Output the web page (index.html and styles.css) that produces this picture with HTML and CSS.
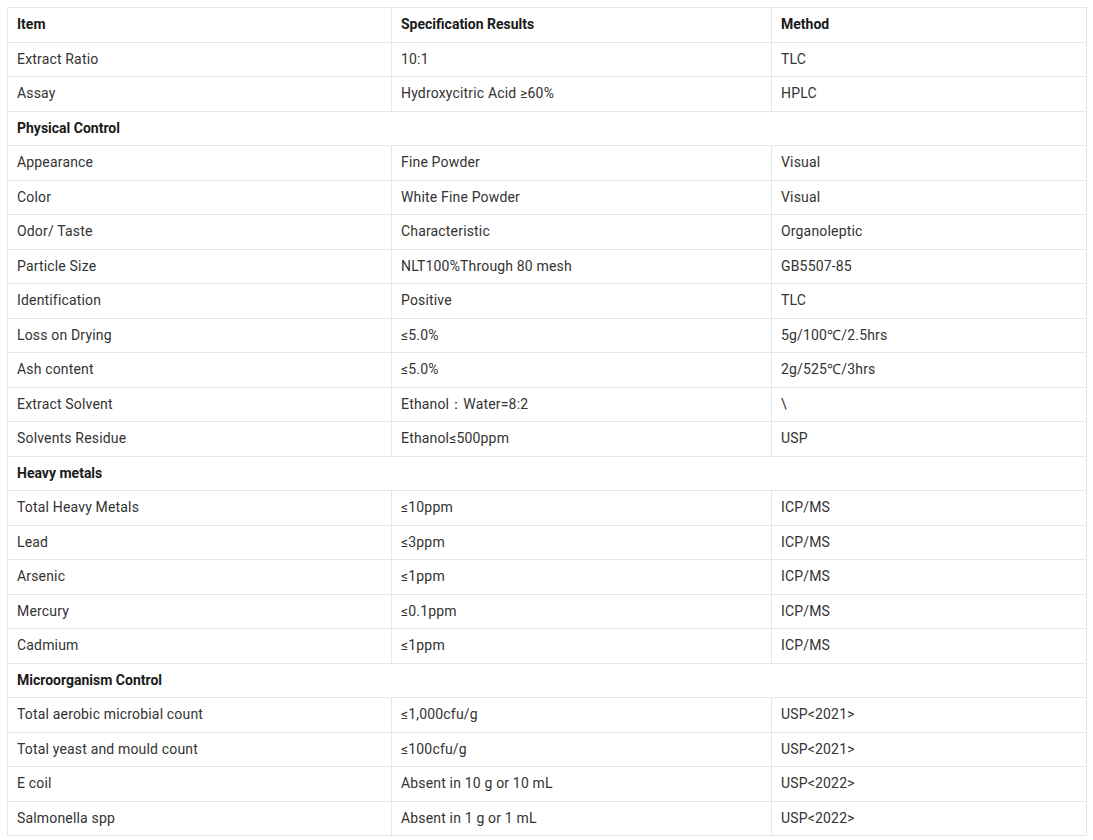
FILE: index.html
```html
<!DOCTYPE html>
<html>
<head>
<meta charset="utf-8">
<link rel="stylesheet" href="styles.css">
</head>
<body>
<div class="wrap">
<table class="spec">
<colgroup><col class="c1"><col class="c2"><col class="c3"></colgroup>
<tr class="head"><td>Item</td><td>Specification Results</td><td>Method</td></tr>
<tr><td>Extract Ratio</td><td>10:1</td><td>TLC</td></tr>
<tr><td>Assay</td><td>Hydroxycitric Acid ≥60%</td><td>HPLC</td></tr>
<tr class="section"><td colspan="3">Physical Control</td></tr>
<tr><td>Appearance</td><td>Fine Powder</td><td>Visual</td></tr>
<tr><td>Color</td><td>White Fine Powder</td><td>Visual</td></tr>
<tr><td>Odor/ Taste</td><td>Characteristic</td><td>Organoleptic</td></tr>
<tr><td>Particle Size</td><td>NLT100%Through 80 mesh</td><td>GB5507-85</td></tr>
<tr><td>Identification</td><td>Positive</td><td>TLC</td></tr>
<tr><td>Loss on Drying</td><td>≤5.0%</td><td>5g/100℃/2.5hrs</td></tr>
<tr><td>Ash content</td><td>≤5.0%</td><td>2g/525℃/3hrs</td></tr>
<tr><td>Extract Solvent</td><td>Ethanol：Water=8:2</td><td>\</td></tr>
<tr><td>Solvents Residue</td><td>Ethanol≤500ppm</td><td>USP</td></tr>
<tr class="section"><td colspan="3">Heavy metals</td></tr>
<tr><td>Total Heavy Metals</td><td>≤10ppm</td><td>ICP/MS</td></tr>
<tr><td>Lead</td><td>≤3ppm</td><td>ICP/MS</td></tr>
<tr><td>Arsenic</td><td>≤1ppm</td><td>ICP/MS</td></tr>
<tr><td>Mercury</td><td>≤0.1ppm</td><td>ICP/MS</td></tr>
<tr><td>Cadmium</td><td>≤1ppm</td><td>ICP/MS</td></tr>
<tr class="section"><td colspan="3">Microorganism Control</td></tr>
<tr><td>Total aerobic microbial count</td><td>≤1,000cfu/g</td><td>USP&lt;2021&gt;</td></tr>
<tr><td>Total yeast and mould count</td><td>≤100cfu/g</td><td>USP&lt;2021&gt;</td></tr>
<tr><td>E coil</td><td>Absent in 10 g or 10 mL</td><td>USP&lt;2022&gt;</td></tr>
<tr><td>Salmonella spp</td><td>Absent in 1 g or 1 mL</td><td>USP&lt;2022&gt;</td></tr>
</table>
</div>
</body>
</html>
```
FILE: styles.css
```css
html, body {
  margin: 0;
  padding: 0;
  background: #ffffff;
}
.wrap {
  padding: 7px 0 0 7px;
}
.spec {
  border-collapse: collapse;
  table-layout: fixed;
  width: 1079px;
  font-family: Roboto, "Liberation Sans", sans-serif;
  font-size: 14px;
  color: #333333;
  letter-spacing: 0.17px;
}
.c1 { width: 384px; }
.c2 { width: 380px; }
.c3 { width: 315px; }
.spec td {
  border: 1px solid #e6e6e6;
  padding: 6px 9px 6px 9px;
  height: 21.5px;
  line-height: 21.5px;
  vertical-align: middle;
  text-align: left;
}
.head td,
.section td {
  font-weight: 700;
  color: #1a1a1a;
  letter-spacing: 0;
}
```
